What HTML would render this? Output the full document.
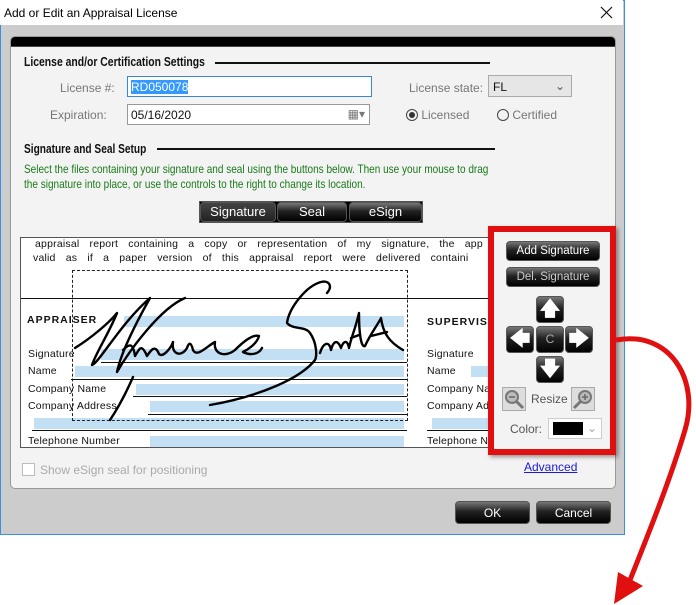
<!DOCTYPE html>
<html><head><style>
*{box-sizing:border-box;margin:0;padding:0}
body{width:696px;height:605px;background:#fff;position:relative;overflow:hidden;font-family:"Liberation Sans",sans-serif;font-size:12px;color:#333}
.abs{position:absolute}
.win{left:0;top:0;width:625px;height:535px;border:1px solid #3a8ee6;background:#cccccc}
.title{left:0;top:0;width:623px;height:25px;background:#fff;font-size:12px;color:#000;padding:6px 0 0 4px}
.panel{left:10px;top:36px;width:606px;height:453px;background:#f3f3f3;border:1px solid #999;border-radius:5px;overflow:hidden}
.blackbar{left:0;top:0;width:100%;height:10px;background:#000;border-bottom:1px solid #444}
.h{font-weight:bold;color:#111;font-size:13px;white-space:nowrap;transform-origin:0 0}
.line{height:1.5px;background:#111}
.lbl{color:#777;font-size:12px;white-space:nowrap}
.inp{background:#fff;border:1px solid #999;height:21px;font-size:12px;padding:3px 3px;color:#111}
.btn{background:linear-gradient(#777,#222 45%,#000);color:#fff;border-radius:4px;text-align:center;border:1px solid #555}
.f{font-size:10.5px;color:#111;letter-spacing:.2px;white-space:nowrap}
.blue{background:#c3dff3;height:11px}
.ul{height:1px;background:#111}
</style></head><body>
<div class="abs win"></div>
<div class="abs title">Add or Edit an Appraisal License</div>
<svg class="abs" style="left:600px;top:6px" width="13" height="13"><path d="M1 1L12 12M12 1L1 12" stroke="#111" stroke-width="1.2"/></svg>
<div class="abs panel">
 <div class="abs blackbar"></div>
 <div class="abs h" style="left:13px;top:17px;transform:scaleX(.8)">License and/or Certification Settings</div>
 <div class="abs line" style="left:204px;top:25px;width:275px"></div>
 <div class="abs lbl" style="left:49px;top:44px">License #:</div>
 <div class="abs inp" style="left:116px;top:39px;width:245px;border-color:#3b86d6"><span style="background:#3399ff;color:#fff">RD050078</span></div>
 <div class="abs lbl" style="left:39px;top:71px">Expiration:</div>
 <div class="abs inp" style="left:116px;top:67px;width:243px">05/16/2020<span style="position:absolute;right:4px;top:2px;color:#777">▦▾</span></div>
 <div class="abs lbl" style="left:398px;top:44px">License state:</div>
 <div class="abs" style="left:477px;top:38px;width:84px;height:22px;background:#e6e6e6;border:1px solid #aaa;font-size:12px;padding:4px 4px;color:#111">FL<span style="position:absolute;right:6px;top:3px;color:#555">⌄</span></div>
 <div class="abs lbl" style="left:395px;top:71px"><span style="display:inline-block;width:12px;height:12px;border:1px solid #444;border-radius:50%;vertical-align:-2px;position:relative"><span style="position:absolute;left:2px;top:2px;width:6px;height:6px;background:#333;border-radius:50%"></span></span> Licensed</div>
 <div class="abs lbl" style="left:486px;top:71px"><span style="display:inline-block;width:12px;height:12px;border:1px solid #444;border-radius:50%;vertical-align:-2px"></span> Certified</div>
 <div class="abs h" style="left:13px;top:104px;transform:scaleX(.78)">Signature and Seal Setup</div>
 <div class="abs line" style="left:146px;top:111px;width:338px"></div>
 <div class="abs" style="left:13px;top:125px;color:#1a7a1a;font-size:12px;line-height:15px;white-space:nowrap;transform:scaleX(.835);transform-origin:0 0">Select the files containing your signature and seal using the buttons below. Then use your mouse to drag<br>the signature into place, or use the controls to the right to change its location.</div>
 <div class="abs" style="left:188px;top:164px;width:224px;height:22px;background:#000;border:1px solid #555"></div>
 <div class="abs btn" style="left:189px;top:165px;width:76px;height:20px;background:linear-gradient(#444,#222);font-size:13px;padding-top:1px">Signature</div>
 <div class="abs btn" style="left:266px;top:165px;width:70px;height:20px;font-size:13px;padding-top:1px">Seal</div>
 <div class="abs btn" style="left:338px;top:165px;width:73px;height:20px;font-size:13px;padding-top:1px">eSign</div>
 <div class="abs" style="left:9px;top:200px;width:470px;height:211px;background:#fff;border:1px solid #555;overflow:hidden">
  <div class="abs f" style="left:14px;top:0;word-spacing:7px">appraisal report containing a copy or representation of my signature, the app</div>
  <div class="abs f" style="left:12px;top:14px;word-spacing:7px">valid as if a paper version of this appraisal report were delivered containi</div>
  <div class="abs ul" style="left:0;top:60px;width:470px"></div>
  <div class="abs f" style="left:6px;top:76px;font-weight:bold;letter-spacing:1px">APPRAISER</div>
  <div class="abs blue" style="left:103px;top:78px;width:280px"></div>
  <div class="abs f" style="left:7px;top:110px">Signature</div>
  <div class="abs blue" style="left:80px;top:111px;width:303px"></div><div class="abs ul" style="left:80px;top:124px;width:306px"></div>
  <div class="abs f" style="left:7px;top:127px">Name</div>
  <div class="abs blue" style="left:54px;top:128px;width:329px"></div><div class="abs ul" style="left:50px;top:141px;width:336px"></div>
  <div class="abs f" style="left:7px;top:145px">Company Name</div>
  <div class="abs blue" style="left:115px;top:146px;width:268px"></div><div class="abs ul" style="left:112px;top:158px;width:274px"></div>
  <div class="abs f" style="left:7px;top:162px">Company Address</div>
  <div class="abs blue" style="left:129px;top:163px;width:254px"></div><div class="abs ul" style="left:127px;top:176px;width:259px"></div>
  <div class="abs blue" style="left:13px;top:180px;width:370px"></div><div class="abs ul" style="left:11px;top:192px;width:375px"></div>
  <div class="abs f" style="left:7px;top:197px">Telephone Number</div>
  <div class="abs blue" style="left:129px;top:198px;width:254px"></div><div class="abs ul" style="left:127px;top:211px;width:259px"></div>
  <div class="abs f" style="left:406px;top:78px;font-weight:bold;letter-spacing:1px">SUPERVISOR</div>
  <div class="abs f" style="left:406px;top:110px">Signature</div>
  <div class="abs f" style="left:406px;top:127px">Name</div>
  <div class="abs blue" style="left:450px;top:128px;width:30px"></div>
  <div class="abs f" style="left:406px;top:145px">Company Name</div>
  <div class="abs f" style="left:406px;top:162px">Company Address</div>
  <div class="abs blue" style="left:411px;top:180px;width:60px"></div><div class="abs ul" style="left:406px;top:192px;width:70px"></div>
  <div class="abs f" style="left:406px;top:197px">Telephone Number</div>
  <div class="abs" style="left:51px;top:32px;width:336px;height:151px;border:1px dashed #222"></div>
  <svg class="abs" style="left:0;top:0" width="470" height="211" fill="none" stroke="#000" stroke-width="2.4" stroke-linecap="round" stroke-linejoin="round">
   <path d="M54 110 C70 100 88 85 96 75 C88 95 75 115 71 127 C78 125 100 85 129 60 C115 85 100 115 96 134 C110 110 140 70 164 60"/>
   <path d="M102 112 C108 106 112 104 114 118 C118 112 120 104 126 118 C130 112 134 106 138 116 C142 120 150 110 152 104 C150 116 160 120 166 110 C168 104 170 104 172 112 C176 120 186 108 194 104 C192 116 204 120 214 112 C222 104 232 96 238 98 C236 106 226 112 222 114 C230 118 238 116 241 110"/>
   <path d="M112 139 C105 155 97 170 89 182"/>
   <path d="M306 55 C312 48 308 42 300 44 C285 48 268 70 266 85 C272 92 285 88 289 95 C296 105 296 118 294 122 C280 140 240 158 189 167"/>
   <path d="M299 115 C302 105 308 102 310 112 C312 104 316 100 320 110 C322 104 326 100 328 110 C330 100 334 92 338 75 C338 95 340 110 344 108 C350 95 356 88 360 80 C362 95 368 104 382 112 M330 100 L338 97 M350 98 L366 94"/>
  </svg>
 </div>
 <div class="abs" style="left:11px;top:426px;width:13px;height:13px;border:1px solid #bbb;background:#fff"></div>
 <div class="abs" style="left:29px;top:426px;color:#aaa;font-size:12px">Show eSign seal for positioning</div>
 <div class="abs" style="left:513px;top:423px;color:#1a1ad8;text-decoration:underline;font-size:12px">Advanced</div>
 <div class="abs btn" style="left:495px;top:204px;width:94px;height:20px;font-size:11.5px;padding-top:3px">Add Signature</div>
 <div class="abs btn" style="left:495px;top:230px;width:94px;height:20px;font-size:11.5px;padding-top:3px;color:#ccc">Del. Signature</div>
 <div class="abs btn" style="left:525px;top:259px;width:28px;height:27px;font-size:20px;line-height:24px;font-weight:bold">🡅</div>
 <div class="abs btn" style="left:495px;top:289px;width:28px;height:27px;font-size:20px;line-height:24px;font-weight:bold">🡄</div>
 <div class="abs btn" style="left:525px;top:289px;width:28px;height:27px;font-size:12px;line-height:24px;color:#aaa">C</div>
 <div class="abs btn" style="left:554px;top:289px;width:28px;height:27px;font-size:20px;line-height:24px;font-weight:bold">🡆</div>
 <div class="abs btn" style="left:525px;top:319px;width:28px;height:27px;font-size:20px;line-height:24px;font-weight:bold">🡇</div>
 <div class="abs" style="left:491px;top:350px;width:24px;height:24px;border:1px solid #aaa;background:#ddd"><svg width="22" height="22"><circle cx="9" cy="9" r="6" fill="#bbb" stroke="#777" stroke-width="2"/><path d="M13 13L20 20" stroke="#777" stroke-width="3"/><path d="M6 9H12" stroke="#666" stroke-width="1.5"/></svg></div>
 <div class="abs" style="left:520px;top:355px;color:#555;font-size:12px">Resize</div>
 <div class="abs" style="left:560px;top:350px;width:24px;height:24px;border:1px solid #aaa;background:#ddd"><svg width="22" height="22"><circle cx="13" cy="9" r="6" fill="#bbb" stroke="#777" stroke-width="2"/><path d="M9 13L2 20" stroke="#777" stroke-width="3"/><path d="M10 9H16M13 6V12" stroke="#666" stroke-width="1.5"/></svg></div>
 <div class="abs" style="left:499px;top:385px;color:#555;font-size:12px">Color:</div>
 <div class="abs" style="left:537px;top:381px;width:54px;height:21px;border:1px solid #ccc;background:#fff"><div style="position:absolute;left:4px;top:3px;width:30px;height:13px;background:#000"></div><span style="position:absolute;right:4px;top:2px;color:#aaa">⌄</span></div>
</div>
<div class="abs" style="left:488px;top:226px;width:128px;height:229px;border:6px solid #e01010;box-shadow:2px 2px 4px rgba(0,0,0,.4)"></div>
<div class="abs btn" style="left:455px;top:501px;width:75px;height:23px;font-size:12px;padding-top:4px">OK</div>
<div class="abs btn" style="left:536px;top:501px;width:75px;height:23px;font-size:12px;padding-top:4px">Cancel</div>
<svg class="abs" style="left:0;top:0" width="696" height="605">
 <path d="M616 340 C670 330 700 380 685 430 C670 480 650 530 630 580" fill="none" stroke="#e01010" stroke-width="5"/>
 <polygon points="614,604 618,572 643,586" fill="#e01010"/>
</svg>
</body></html>
